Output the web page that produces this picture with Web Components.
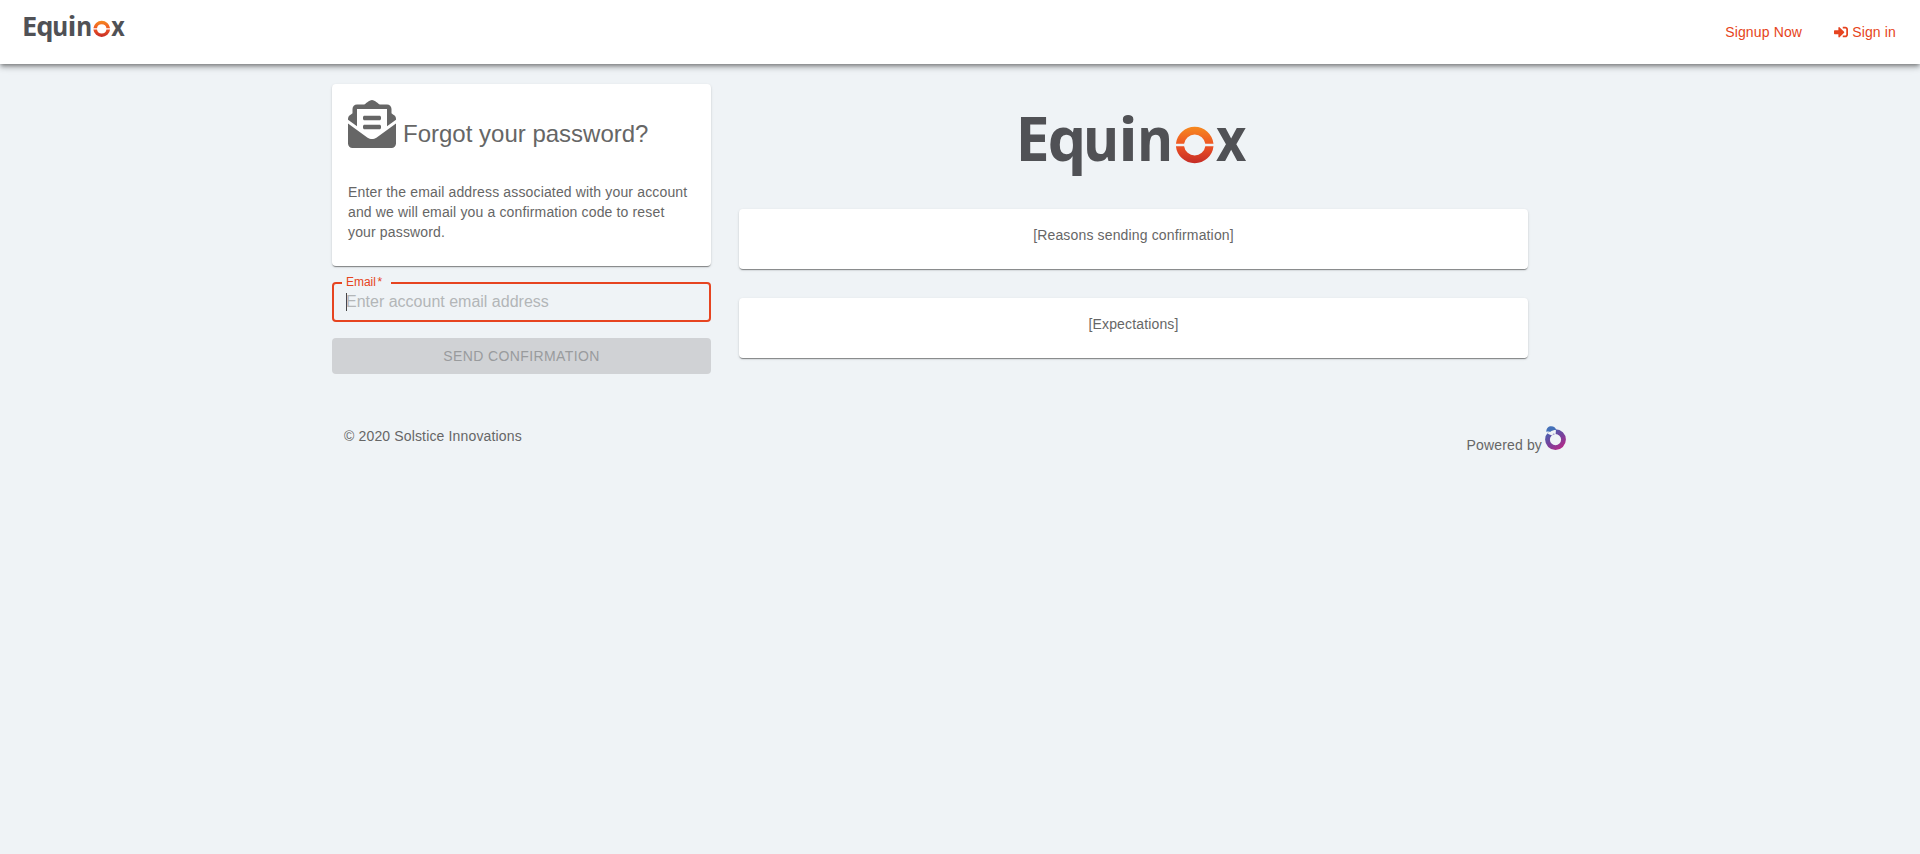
<!DOCTYPE html>
<html lang="en">
<head>
<meta charset="utf-8">
<title>Equinox</title>
<style>
  body { margin: 0; background: #eff3f6; color: #666; font: 14px/20px "Liberation Sans", Arial, sans-serif; letter-spacing: 0.15px; }
</style>
</head>
<body>
<reset-page></reset-page>
<script>
const define = (name, html) => customElements.define(name, class extends HTMLElement {
  constructor() {
    super();
    const t = document.createElement('template');
    t.innerHTML = html;
    this.attachShadow({ mode: 'open' }).append(t.content.cloneNode(true));
  }
});

define('brand-logo', `
<style>
  :host { display: block; width: 227px; height: 60px; }
  svg { display: block; width: 100%; height: 100%; overflow: visible; }
  text { font: 700 61px "Noto Sans", "Open Sans", sans-serif; fill: #505155; letter-spacing: 0; }
</style>
<svg viewBox="0 0 227 60">
  <defs><linearGradient id="sun" x1="0" y1="10" x2="0" y2="48" gradientUnits="userSpaceOnUse">
    <stop offset="0" stop-color="#f68b1f"/><stop offset=".5" stop-color="#ee5424"/><stop offset="1" stop-color="#c32a26"/>
  </linearGradient></defs>
  <text y="45.2" x="-4.4 27.6">Eq</text>
  <text transform="translate(63.2 45.2) scale(.9 1)">u</text>
  <text transform="translate(98.4 45.2) scale(1.05 1)">i</text>
  <text transform="translate(117.2 45.2) scale(.9 1)">n</text>
  <path fill="url(#sun)" d="M155.9 27.8A18.9 18.9 0 0 1 193.5 27.8H185.3A10.7 10.7 0 0 0 164.1 27.8ZM155.9 30.2H164.1A10.7 10.7 0 0 0 185.3 30.2H193.5A18.9 18.9 0 0 1 155.9 30.2Z"/>
  <text transform="translate(195.9 45.2) scale(.86 1)">x</text>
</svg>`);

define('sign-in-icon', `
<style>:host { display: inline-block; width: 14px; height: 14px; } svg { display: block; width: 100%; height: 100%; fill: currentColor; }</style>
<svg viewBox="0 0 512 512"><path d="M416 448h-84c-6.6 0-12-5.4-12-12v-40c0-6.6 5.4-12 12-12h84c17.7 0 32-14.3 32-32V160c0-17.7-14.3-32-32-32h-84c-6.6 0-12-5.4-12-12V76c0-6.6 5.4-12 12-12h84c53 0 96 43 96 96v192c0 53-43 96-96 96zm-47-201L201 79c-15-15-41-4.5-41 17v96H24c-13.3 0-24 10.7-24 24v96c0 13.3 10.7 24 24 24h136v96c0 21.5 26 32 41 17l168-168c9.3-9.4 9.3-24.6 0-34z"/></svg>`);

define('envelope-icon', `
<style>:host { display: block; width: 48px; height: 48px; } svg { display: block; width: 100%; height: 100%; fill: currentColor; }</style>
<svg viewBox="0 0 512 512"><path d="M176 216h160c8.84 0 16-7.16 16-16v-16c0-8.84-7.16-16-16-16H176c-8.84 0-16 7.16-16 16v16c0 8.84 7.16 16 16 16zm-16 80c0 8.84 7.16 16 16 16h160c8.84 0 16-7.16 16-16v-16c0-8.84-7.16-16-16-16H176c-8.84 0-16 7.16-16 16v16zm96 121.13c-16.42 0-32.84-5.06-46.86-15.19L0 250.86V464c0 26.51 21.49 48 48 48h416c26.51 0 48-21.49 48-48V250.86L302.86 401.94c-14.02 10.12-30.44 15.19-46.86 15.19zm237.61-254.18c-8.85-6.94-17.24-13.47-29.61-22.81V96c0-26.51-21.49-48-48-48h-77.55c-3.04-2.2-5.87-4.26-9.04-6.56C312.6 29.17 279.2-.35 256 0c-23.2-.35-56.59 29.17-73.41 41.44-3.17 2.3-6 4.36-9.04 6.56H96c-26.51 0-48 21.49-48 48v44.14c-12.37 9.33-20.76 15.87-29.61 22.81A47.995 47.995 0 0 0 0 200.72v10.65l96 69.35V96h320v184.72l96-69.35v-10.65c0-14.74-6.78-28.67-18.39-37.77z"/></svg>`);

define('ring-icon', `
<style>:host { display: block; width: 21px; height: 24px; } svg { display: block; width: 100%; height: 100%; }</style>
<svg viewBox="0 0 21 24">
  <defs><linearGradient id="g" x1="3" y1="5" x2="16" y2="23" gradientUnits="userSpaceOnUse">
    <stop offset="0" stop-color="#4763b0"/><stop offset=".55" stop-color="#7a3f9b"/><stop offset="1" stop-color="#b52a88"/></linearGradient></defs>
  <circle cx="10.5" cy="13.6" r="8" fill="none" stroke="url(#g)" stroke-width="4.8"/>
  <path d="M2.2 7.2L5 5L11 3.5L10.6 8.4L8.6 7.6L7.2 9.4L4.4 8.6Z" fill="#eff3f6"/>
  <path d="M1.4 6C1.1 2.2 3.5 .2 6.2 .2C8.8 .2 10.8 1.6 11.2 4.2C8.8 3.6 6.6 4.2 5.2 6C4 5.4 2.4 5.4 1.4 6Z" fill="#4470b8"/>
</svg>`);

define('site-header', `
<style>
  :host { display: flex; justify-content: space-between; box-sizing: border-box; height: 64px; padding: 0 24px; background: #fff; position: relative;
    box-shadow: 0 2px 4px -1px rgba(0,0,0,.4), 0 4px 5px rgba(0,0,0,.16), 0 1px 10px rgba(0,0,0,.12); }
  brand-logo { width: 101px; height: 26.7px; margin-top: 15.5px; }
  nav { display: flex; gap: 32px; align-items: center; color: #e64420; letter-spacing: .15px; }
  a { display: flex; align-items: center; gap: 4px; }
</style>
<brand-logo></brand-logo>
<nav><a>Signup Now</a><a><sign-in-icon></sign-in-icon>Sign in</a></nav>`);

define('paper-card', `
<style>:host { display: block; box-sizing: border-box; padding: 16px; background: #fff; border-radius: 4px;
  box-shadow: 0 2px 1px -1px rgba(0,0,0,.3), 0 1px 1px rgba(0,0,0,.16), 0 1px 3px rgba(0,0,0,.12); }</style>
<slot></slot>`);

define('email-field', `
<style>
  :host { display: block; height: 40px; }
  fieldset { box-sizing: border-box; height: 45px; margin: -5px 0 0; padding: 0 12px; border: 2px solid #e64420; border-radius: 4px; min-width: 0; }
  legend { padding: 0 4px; margin-left: -4px; width: 41px; height: 11px; line-height: 11px; font-size: 12px; color: #e64420; letter-spacing: -.05px; white-space: nowrap; word-spacing: -1.5px; }
  div { display: flex; align-items: center; font-size: 16px; color: #b3b6b8; height: 18px; margin-top: 5px; line-height: 18px; letter-spacing: 0; }
  i { width: 1px; height: 18px; background: #444; margin-right: -1px; }
</style>
<fieldset><legend>Email *</legend><div><i></i><span>Enter account email address</span></div></fieldset>`);

define('send-button', `
<style>:host { display: flex; height: 36px; align-items: center; justify-content: center; background: #d0d2d5; color: #999b9d; border-radius: 4px; text-transform: uppercase; letter-spacing: .4px; }</style>
<slot></slot>`);

define('reset-page', `
<style>
  :host { display: block; }
  main { display: grid; grid-template-columns: 379px 789px; column-gap: 28px; padding: 20px 0 0 332px; align-items: start; }
  section { display: grid; }
  .form { gap: 16px; }
  .intro { height: 182px; }
  .title { display: flex; gap: 7px; }
  h1 { margin: 18px 0 0; font-size: 24px; line-height: 32px; font-weight: 400; letter-spacing: 0; white-space: nowrap; }
  p { margin: 32px 0 0; }
  .info { padding-top: 32px; gap: 29px; text-align: center; }
  .info brand-logo { margin: 0 auto 4px; }
  .info paper-card { height: 60px; }
  footer { display: flex; justify-content: space-between; padding: 52px 354px 0 344px; }
  .by { display: flex; gap: 3px; }
  .by span { margin-top: 9px; }
</style>
<site-header></site-header>
<main>
  <section class="form">
    <paper-card class="intro">
      <div class="title"><envelope-icon></envelope-icon><h1>Forgot your password?</h1></div>
      <p>Enter the email address associated with your account<br>and we will email you a confirmation code to reset<br>your password.</p>
    </paper-card>
    <email-field></email-field>
    <send-button>Send confirmation</send-button>
  </section>
  <section class="info">
    <brand-logo></brand-logo>
    <paper-card>[Reasons sending confirmation]</paper-card>
    <paper-card>[Expectations]</paper-card>
  </section>
</main>
<footer><span>© 2020 Solstice Innovations</span><div class="by"><span>Powered by</span><ring-icon></ring-icon></div></footer>`);
</script>
</body>
</html>
